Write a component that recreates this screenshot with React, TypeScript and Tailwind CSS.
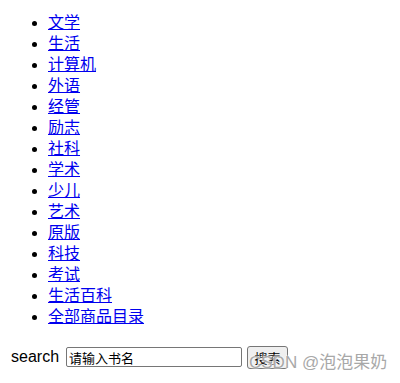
import React from "react";

const items = ["文学","生活","计算机","外语","经管","励志","社科","学术","少儿","艺术","原版","科技","考试","生活百科","全部商品目录"];

export default function App() {
  return (
    <div className="relative m-2 text-base text-black font-['Liberation_Sans','Noto_Sans_CJK_SC',sans-serif]">
      <ul className="list-disc pl-10 pt-[4px]">
        {items.map((t) => (
          <li key={t} className="leading-[21px]">
            <a href="#" className="text-[#0000ee] underline">{t}</a>
          </li>
        ))}
      </ul>
      <div className="mt-[18px] flex items-center pl-[3px] h-[24px]">
        <span className="leading-[20px]">search</span>
        <input
          className="ml-[7px] w-[176px] h-[20px] border border-[#767676] rounded-[2px] px-[2px] text-[13px] text-black outline-none font-['Noto_Sans_CJK_SC',sans-serif]"
          defaultValue="请输入书名"
        />
        <button className="ml-[5px] w-[41px] h-[23px] bg-[#efefef] border border-[#767676] rounded-[3px] text-[13px] leading-none font-['Noto_Sans_CJK_SC',sans-serif]">
          搜索
        </button>
      </div>
      <div className="absolute left-[241px] top-[345px] text-[17px] leading-[20px] text-[#a8a8a8] font-['Liberation_Sans','Noto_Sans_CJK_SC',sans-serif] [text-shadow:0_0_2px_#fff,0_0_2px_#fff] pointer-events-none whitespace-nowrap">
        CSDN @泡泡果奶
      </div>
    </div>
  );
}
